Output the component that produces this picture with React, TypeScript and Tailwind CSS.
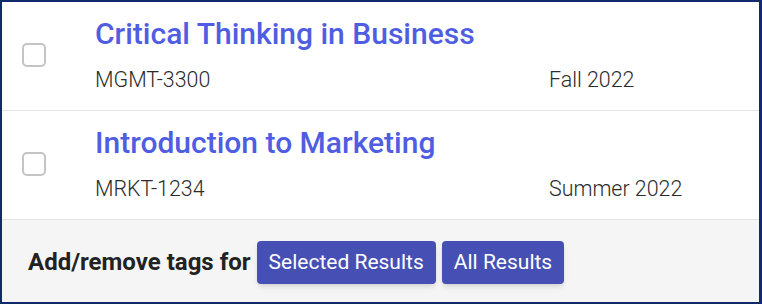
const courses = [
  { title: "Critical Thinking in Business", code: "MGMT-3300", term: "Fall 2022" },
  { title: "Introduction to Marketing", code: "MRKT-1234", term: "Summer 2022" },
];

function CourseRow({ title, code, term }: { title: string; code: string; term: string }) {
  return (
    <div className="flex items-center border-b border-[#e4e4e4] bg-white pt-[14px] pb-[16px]">
      <div className="flex w-[93px] shrink-0 pl-[20px]">
        <input
          type="checkbox"
          className="h-[24px] w-[24px] appearance-none rounded-[5px] border-2 border-[#c4c4c4] bg-white"
        />
      </div>
      <div className="flex flex-col gap-[14px]">
        <a href="#" className="text-[30px] leading-[36px] font-medium text-[#4f5de3]">
          {title}
        </a>
        <div className="grid grid-cols-[454px_1fr] text-[21.4px] leading-[28px] font-light text-[#2b2b2b]">
          <span>{code}</span>
          <span>{term}</span>
        </div>
      </div>
    </div>
  );
}

export default function App() {
  return (
    <div
      className="flex h-[304px] w-[762px] flex-col border-t-2 border-r-[3px] border-b-2 border-l-2 border-[#112a6b] bg-white"
      style={{ fontFamily: "Roboto, 'Liberation Sans', sans-serif" }}
    >
      {courses.map((c) => (
        <CourseRow key={c.code} {...c} />
      ))}
      <div className="flex flex-1 items-center gap-[6px] bg-[#f5f5f5] px-[26px] pt-[2px]">
        <span className="text-[24px] font-bold text-[#222]">Add/remove tags for</span>
        <button className="h-[43px] rounded-[4px] bg-[#4650b4] px-[12px] pt-[2px] text-[21px] text-white shadow-md">
          Selected Results
        </button>
        <button className="h-[43px] rounded-[4px] bg-[#4650b4] px-[12px] pt-[2px] text-[21px] text-white shadow-md">
          All Results
        </button>
      </div>
    </div>
  );
}
